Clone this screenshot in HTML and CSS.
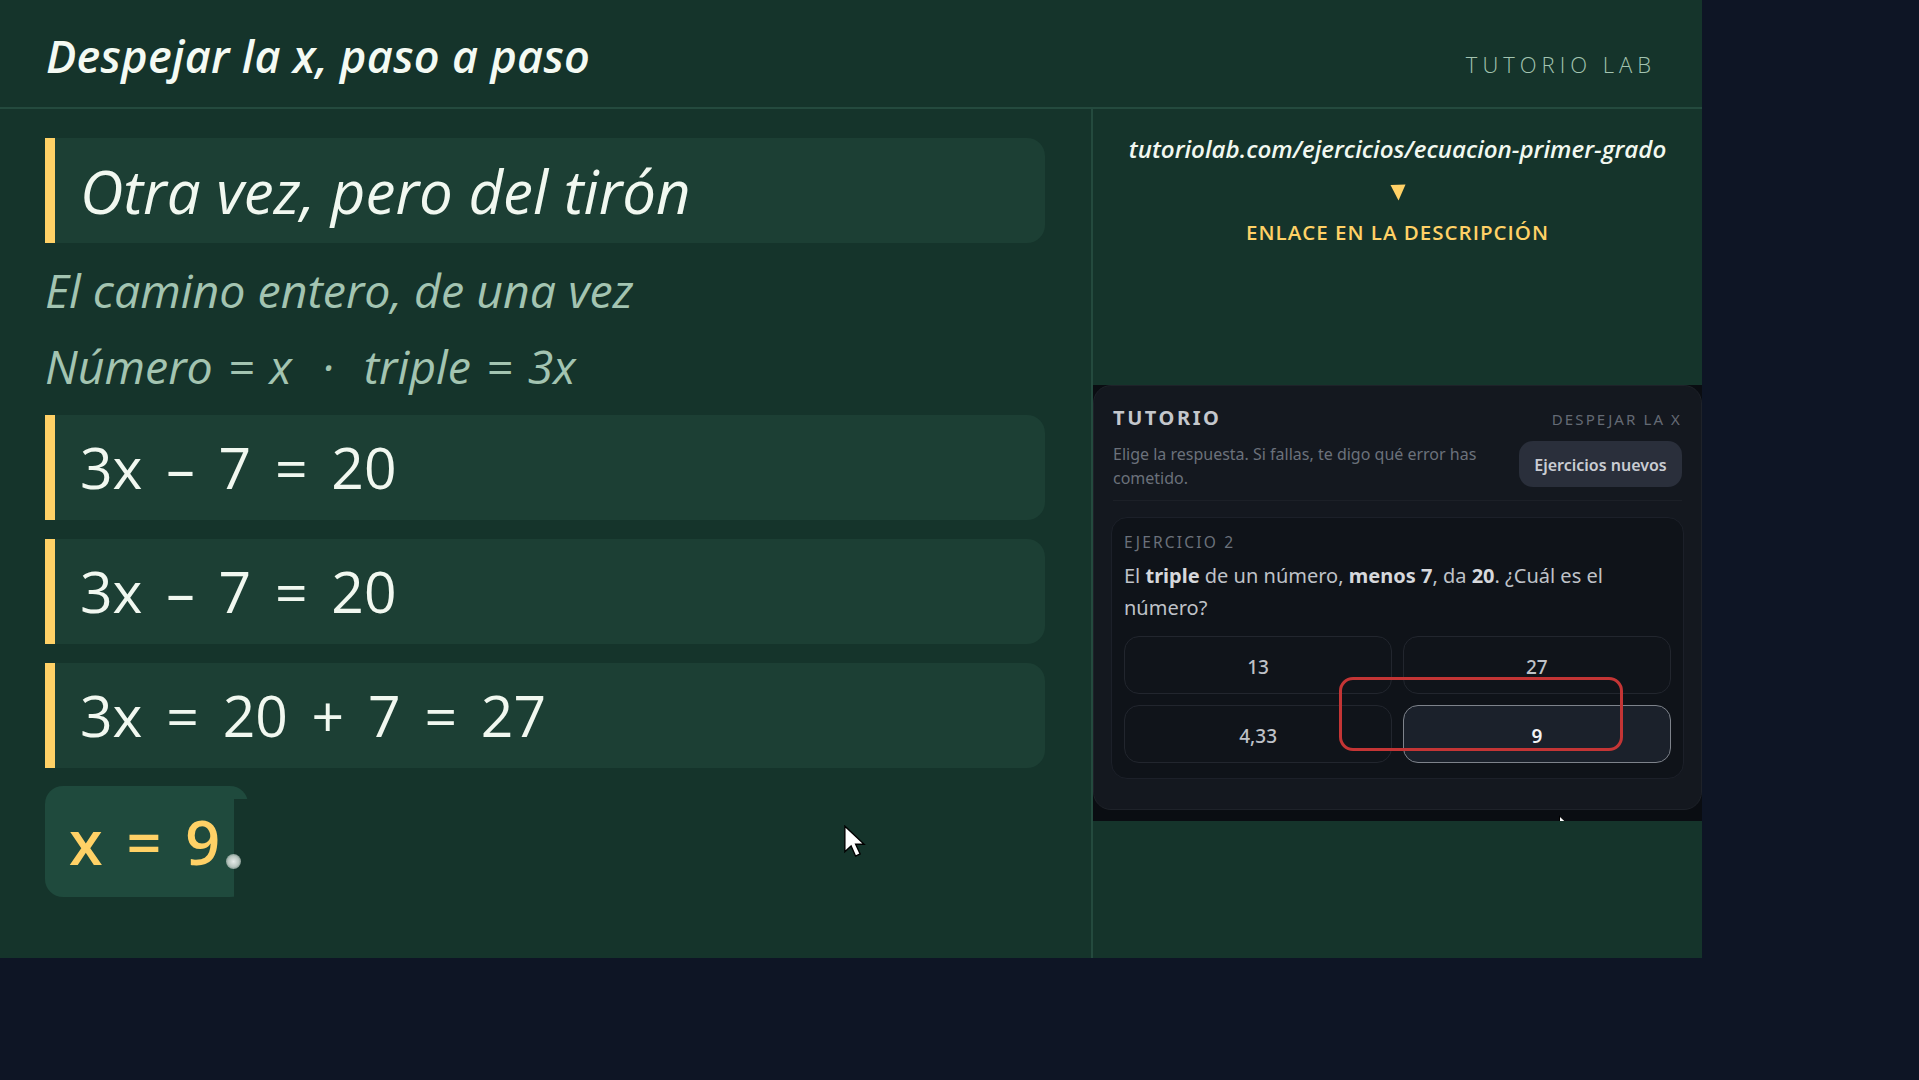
FILE: index.html
```html
<!DOCTYPE html>
<html lang="es">
<head>
<meta charset="utf-8">
<title>Despejar la x, paso a paso</title>
<link rel="stylesheet" href="styles.css">
</head>
<body>
<div class="stage">
  <header class="top">
    <h1 class="title">Despejar la x, paso a paso</h1>
    <span class="brand">TUTORIO LAB</span>
  </header>
  <div class="main">
    <section class="board">
      <div class="card card-head">Otra vez, pero del tirón</div>
      <div class="sub">El camino entero, de una vez</div>
      <div class="sub sub-eq">Número = x &nbsp;·&nbsp; triple = 3x</div>
      <div class="card eq">3x – 7 = 20</div>
      <div class="card eq">3x – 7 = 20</div>
      <div class="card eq">3x = 20 + 7 = 27</div>
      <div class="answer"><span class="answer-text">x = 9</span><span class="wipe"></span><span class="chalk"></span></div>
      <svg class="cursor" viewBox="0 0 20 30" width="23" height="34"><path d="M1.5 1 L1.5 23.5 L7 18.5 L11 27.5 L15 25.5 L11 17 L18.5 17 Z" fill="#fff" stroke="#000" stroke-width="1.2"/></svg>
    </section>
    <aside class="side">
      <div class="link-box">
        <div class="url">tutoriolab.com/ejercicios/ecuacion-primer-grado</div>
        <svg class="arrow" viewBox="0 0 16 17" width="16" height="17"><path d="M0.5 1 L15.5 0.5 L8.5 16.5 Z" fill="#ffd166"/></svg>
        <div class="hint">ENLACE EN LA DESCRIPCIÓN</div>
      </div>
      <div class="embed">
        <div class="tutor">
          <div class="tutor-top">
            <span class="tutor-name">TUTORIO</span>
            <span class="tutor-topic">DESPEJAR LA X</span>
          </div>
          <div class="tutor-intro">
            <p class="tutor-desc">Elige la respuesta. Si fallas, te digo qué error has cometido.</p>
            <span class="btn-new">Ejercicios nuevos</span>
          </div>
          <div class="exercise">
            <div class="ex-label">EJERCICIO 2</div>
            <p class="ex-q">El <b>triple</b> de un número, <b>menos 7</b>, da <b>20</b>. ¿Cuál es el número?</p>
            <div class="options">
              <div class="opt">13</div>
              <div class="opt">27</div>
              <div class="opt">4,33</div>
              <div class="opt opt-on">9</div>
            </div>
          </div>
        </div>
        <span class="redbox"></span>
        <svg class="cursor-cut" viewBox="0 0 20 30" width="20" height="30"><path d="M1.5 1 L1.5 23.5 L7 18.5 L11 27.5 L15 25.5 L11 17 L18.5 17 Z" fill="#fff" stroke="#000" stroke-width="1"/></svg>
      </div>
    </aside>
  </div>
</div>
</body>
</html>
```
FILE: styles.css
```css
* { box-sizing: border-box; }
html, body { margin: 0; height: 100%; background: #0e1525; overflow: hidden; }
.stage {
  width: 1702px; height: 958px; background: #15342b; color: #f1f8f0;
  display: flex; flex-direction: column;
  font-family: "Open Sans", sans-serif; font-style: italic;
}
.top {
  height: 109px; flex: none; border-bottom: 2px solid #244a3e;
  display: flex; justify-content: space-between; align-items: center;
  padding: 0 46px 0 46px;
}
.title { margin: 0; font-size: 45px; font-weight: 600; color: #f4faf3; letter-spacing: 0.3px; padding-top: 4px; }
.brand { font-size: 22px; font-weight: 300; font-style: normal; letter-spacing: 5px; color: #a3c4b1; padding-top: 20px; }
.main { flex: 1; display: flex; min-height: 0; }
.board {
  width: 1093px; flex: none; border-right: 2px solid #244a3e;
  padding: 29px 46px 0 45px; display: flex; flex-direction: column; gap: 18.6px;
  position: relative;
}
.card {
  height: 105.4px; flex: none; background: #1c3f34; border-left: 10px solid #ffd166;
  border-radius: 0 18px 18px 0; display: flex; align-items: center;
  padding-left: 25px; font-size: 60px; color: #f1f8f0;
}
.eq { font-size: 57px; font-style: normal; word-spacing: 9px; }
.sub { height: 57.8px; flex: none; font-size: 46.5px; line-height: 57px; color: #a3c4b1; }
.sub-eq { word-spacing: 3px; }
.answer {
  position: relative; align-self: flex-start; width: 203px; height: 111px; margin-top: -0.6px;
  background: #1f4a3d; border-radius: 18px; display: flex; align-items: center;
  padding-left: 24px; color: #ffd166; font-size: 61px; font-weight: 600; font-style: normal; word-spacing: 8px;
}
.answer-text { white-space: nowrap; }
.wipe { position: absolute; left: 189px; top: 13px; right: 0; bottom: 0; background: #15342b; }
.chalk {
  position: absolute; left: 181px; top: 68px; width: 15px; height: 15px; border-radius: 50%;
  background: radial-gradient(circle, #e6ebe8 0%, #b9c6c0 50%, rgba(185,198,192,.25) 100%);
}
.cursor { position: absolute; left: 843px; top: 716px; }
.side { flex: 1; display: flex; flex-direction: column; min-width: 0; }
.link-box {
  height: 276px; flex: none; display: flex; flex-direction: column; align-items: center;
  padding-top: 22px;
}
.url { font-size: 24.1px; font-weight: 600; color: #f1f8f0; line-height: 36px; }
.arrow { margin-top: 17px; display: block; }
.hint { font-size: 20.5px; font-weight: 600; font-style: normal; letter-spacing: 1px; color: #ffd166; margin-top: 16px; line-height: 30px; }
.embed {
  position: relative; height: 436px; background: #0a0d12; overflow: hidden;
  font-family: "Noto Sans", sans-serif; font-style: normal;
}
.tutor {
  height: 425px; background: #14181f; border: 1px solid #1e2229; border-radius: 18px;
  padding: 18px 19px 0; display: flex; flex-direction: column;
}
.tutor-top { display: flex; justify-content: space-between; align-items: center; height: 27px; }
.tutor-name { font-size: 20px; font-weight: 700; letter-spacing: 2.6px; color: #c4c7cc; }
.tutor-topic { font-size: 15px; letter-spacing: 2.1px; color: #646a74; padding-top: 2px; }
.tutor-intro {
  display: flex; justify-content: space-between; align-items: flex-start; gap: 20px;
  margin-top: 10px; padding-bottom: 10px; border-bottom: 1px solid #1c2027;
}
.tutor-desc { margin: 0; font-size: 16px; line-height: 24px; color: #6b717b; padding-top: 1px; }
.btn-new {
  flex: none; height: 46px; width: 163px; background: #2a2f3b; border-radius: 14px;
  display: flex; align-items: center; justify-content: center; padding-top: 1px;
  font-size: 16px; font-weight: 600; color: #c9ccd2;
}
.exercise {
  margin: 16px -2px 0; height: 262px; background: #0f1319; border: 1px solid #1c2029;
  border-radius: 16px; padding: 12px 12px 0;
}
.ex-label { font-size: 15.5px; letter-spacing: 2.2px; color: #6b717b; line-height: 24px; }
.ex-q { margin: 6px 0 0; font-size: 20px; line-height: 32px; color: #bfc2c8; }
.ex-q b { color: #d6d8dc; }
.options { display: grid; grid-template-columns: 1fr 1fr; gap: 11px 10.5px; margin-top: 12px; }
.opt {
  height: 58px; border: 1px solid #22262e; border-radius: 15px; background: #10141a;
  display: flex; align-items: center; justify-content: center; padding-top: 4px;
  font-size: 19px; font-weight: 500; color: #bfc2c8;
}
.opt-on { background: #1b212b; border-color: #7e838b; color: #f1f3f5; font-weight: 600; }
.redbox {
  position: absolute; left: 246px; top: 292px; width: 284px; height: 74px;
  border: 3px solid #c43535; border-radius: 14px;
}
.cursor-cut { position: absolute; left: 465px; top: 430px; }
```
